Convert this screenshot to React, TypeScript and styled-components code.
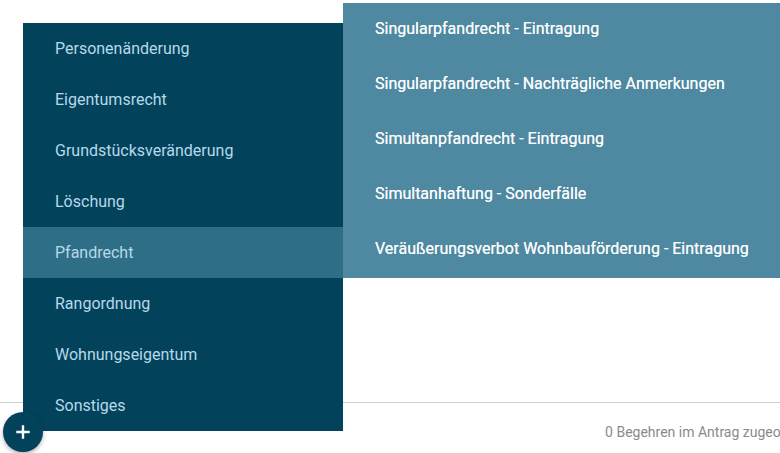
import styled, { createGlobalStyle } from 'styled-components'

const GlobalStyle = createGlobalStyle`
  html, body {
    margin: 0;
    padding: 0;
    background: #ffffff;
  }
  body {
    font-family: Roboto, 'Liberation Sans', Arial, sans-serif;
  }
`

const mainItems = [
  'Personenänderung',
  'Eigentumsrecht',
  'Grundstücksveränderung',
  'Löschung',
  'Pfandrecht',
  'Rangordnung',
  'Wohnungseigentum',
  'Sonstiges',
]

const subItems = [
  'Singularpfandrecht - Eintragung',
  'Singularpfandrecht - Nachträgliche Anmerkungen',
  'Simultanpfandrecht - Eintragung',
  'Simultanhaftung - Sonderfälle',
  'Veräußerungsverbot Wohnbauförderung - Eintragung',
]

export default function App() {
  return (
    <>
      <GlobalStyle />
      <Page>
        <Content />
        <Footer>
          <Status>0 Begehren im Antrag zugeordnet</Status>
        </Footer>

        <Menu>
          {mainItems.map((item) => (
            <MenuItem key={item} $active={item === 'Pfandrecht'}>
              {item}
            </MenuItem>
          ))}
        </Menu>

        <SubMenu>
          {subItems.map((item) => (
            <SubMenuItem key={item}>{item}</SubMenuItem>
          ))}
        </SubMenu>

        <Fab aria-label="add">
          <svg width="14" height="14" viewBox="0 0 14 14">
            <path d="M7 1.5v11M1.5 7h11" stroke="#fff" strokeWidth="2.4" strokeLinecap="square" />
          </svg>
        </Fab>
      </Page>
    </>
  )
}

const Page = styled.div`
  position: relative;
  width: 780px;
  height: 453px;
  overflow: hidden;
  display: flex;
  flex-direction: column;
  background: #ffffff;
`

const Content = styled.div`
  height: 402px;
  flex-shrink: 0;
`

const Footer = styled.div`
  flex: 1;
  border-top: 1px solid #cfcfcf;
  display: flex;
  align-items: center;
  justify-content: flex-end;
  padding-top: 8px;
  box-sizing: border-box;
`

const Status = styled.span`
  font-size: 14px;
  color: #8a8a8a;
  white-space: nowrap;
  margin-right: -33px;
`

const Menu = styled.ul`
  position: absolute;
  top: 23px;
  left: 23px;
  width: 320px;
  margin: 0;
  padding: 0;
  list-style: none;
  background: #02435b;
`

const MenuItem = styled.li<{ $active?: boolean }>`
  height: 51px;
  display: flex;
  align-items: center;
  padding-left: 32px;
  font-size: 16px;
  color: #b7d9ea;
  background: ${(p) => (p.$active ? '#2e6f87' : 'transparent')};
`

const SubMenu = styled.ul`
  position: absolute;
  top: 3px;
  left: 343px;
  width: 460px;
  margin: 0;
  padding: 0;
  list-style: none;
  background: #4f89a1;
`

const SubMenuItem = styled.li`
  height: 55px;
  box-sizing: border-box;
  padding: 0 0 4px 32px;
  display: flex;
  align-items: center;
  font-size: 16px;
  color: #f7fafb;
  text-shadow: 0 0 0.4px #ffffff;
`

const Fab = styled.button`
  position: absolute;
  left: 3px;
  top: 412px;
  width: 40px;
  height: 40px;
  border-radius: 50%;
  border: none;
  padding: 0;
  background: #02435b;
  box-shadow: 0 2px 4px rgba(0, 0, 0, 0.3);
  display: flex;
  align-items: center;
  justify-content: center;
`
